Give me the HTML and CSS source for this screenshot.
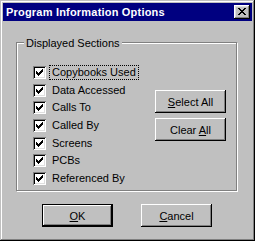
FILE: index.html
```html
<!DOCTYPE html>
<html lang="en">
<head>
    <meta charset="UTF-8">
    <title>Program Information Options</title>
    <link rel="stylesheet" href="styles.css">
</head>
<body>
<div class="dialog">

    <!-- title bar -->
    <div class="titlebar">
        <span class="title">Program Information Options</span>
        <button class="close" type="button">
            <svg width="8" height="7" viewBox="0 0 8 7" shape-rendering="crispEdges">
                <path fill="#000" d="M0 0h2v1h-2z M6 0h2v1h-2z M1 1h2v1h-2z M5 1h2v1h-2z M2 2h4v1h-4z M3 3h2v1h-2z M2 4h4v1h-4z M1 5h2v1h-2z M5 5h2v1h-2z M0 6h2v1h-2z M6 6h2v1h-2z"/>
            </svg>
        </button>
    </div>

    <div class="client">

        <!-- group box -->
        <div class="group">
            <div class="group-label">Displayed Sections</div>
            <div class="group-body">
                <ul class="sections">
                    <li><span class="check"><svg width="7" height="7" viewBox="0 0 7 7" shape-rendering="crispEdges"><path d="M6 0h1v1h-1z M5 1h2v1h-2z M0 2h1v1h-1z M4 2h3v1h-3z M0 3h2v1h-2z M3 3h3v1h-3z M0 4h5v1h-5z M1 5h3v1h-3z M2 6h1v1h-1z"/></svg></span><span class="label focus">Copybooks Used</span></li>
                    <li><span class="check"><svg width="7" height="7" viewBox="0 0 7 7" shape-rendering="crispEdges"><path d="M6 0h1v1h-1z M5 1h2v1h-2z M0 2h1v1h-1z M4 2h3v1h-3z M0 3h2v1h-2z M3 3h3v1h-3z M0 4h5v1h-5z M1 5h3v1h-3z M2 6h1v1h-1z"/></svg></span><span class="label">Data Accessed</span></li>
                    <li><span class="check"><svg width="7" height="7" viewBox="0 0 7 7" shape-rendering="crispEdges"><path d="M6 0h1v1h-1z M5 1h2v1h-2z M0 2h1v1h-1z M4 2h3v1h-3z M0 3h2v1h-2z M3 3h3v1h-3z M0 4h5v1h-5z M1 5h3v1h-3z M2 6h1v1h-1z"/></svg></span><span class="label">Calls To</span></li>
                    <li><span class="check"><svg width="7" height="7" viewBox="0 0 7 7" shape-rendering="crispEdges"><path d="M6 0h1v1h-1z M5 1h2v1h-2z M0 2h1v1h-1z M4 2h3v1h-3z M0 3h2v1h-2z M3 3h3v1h-3z M0 4h5v1h-5z M1 5h3v1h-3z M2 6h1v1h-1z"/></svg></span><span class="label">Called By</span></li>
                    <li><span class="check"><svg width="7" height="7" viewBox="0 0 7 7" shape-rendering="crispEdges"><path d="M6 0h1v1h-1z M5 1h2v1h-2z M0 2h1v1h-1z M4 2h3v1h-3z M0 3h2v1h-2z M3 3h3v1h-3z M0 4h5v1h-5z M1 5h3v1h-3z M2 6h1v1h-1z"/></svg></span><span class="label">Screens</span></li>
                    <li><span class="check"><svg width="7" height="7" viewBox="0 0 7 7" shape-rendering="crispEdges"><path d="M6 0h1v1h-1z M5 1h2v1h-2z M0 2h1v1h-1z M4 2h3v1h-3z M0 3h2v1h-2z M3 3h3v1h-3z M0 4h5v1h-5z M1 5h3v1h-3z M2 6h1v1h-1z"/></svg></span><span class="label">PCBs</span></li>
                    <li><span class="check"><svg width="7" height="7" viewBox="0 0 7 7" shape-rendering="crispEdges"><path d="M6 0h1v1h-1z M5 1h2v1h-2z M0 2h1v1h-1z M4 2h3v1h-3z M0 3h2v1h-2z M3 3h3v1h-3z M0 4h5v1h-5z M1 5h3v1h-3z M2 6h1v1h-1z"/></svg></span><span class="label">Referenced By</span></li>
                </ul>
                <div class="side-buttons">
                    <button class="btn" type="button"><u>S</u>elect All</button>
                    <button class="btn" type="button">Clear <u>A</u>ll</button>
                </div>
            </div>
        </div>

        <!-- dialog buttons -->
        <div class="actions">
            <button class="btn default" type="button"><u>O</u>K</button>
            <button class="btn" type="button"><u>C</u>ancel</button>
        </div>
    </div>
</div>
</body>
</html>
```

FILE: styles.css
```css
body {
    margin: 0;
    font-family: "Liberation Sans", Arial, sans-serif;
    font-size: 11px;
    color: #000;
}

.dialog {
    width: 255px;
    height: 241px;
    box-sizing: border-box;
    padding: 3px;
    background-color: #c0c0c0;
    box-shadow: inset -1px -1px #000, inset 1px 1px #c0c0c0,
                inset -2px -2px #808080, inset 2px 2px #fff;
}

.titlebar {
    height: 18px;
    background-color: #000080;
    display: flex;
    align-items: center;
    padding-left: 3px;
}

.title {
    flex: 1;
    color: #fff;
    font-weight: bold;
    line-height: 18px;
    letter-spacing: 0.2px;
}

.close {
    width: 16px;
    height: 14px;
    margin-right: 2px;
    padding: 3px 0 0 4px;
    border: none;
    background-color: #c0c0c0;
    display: flex;
    align-items: flex-start;
    box-sizing: border-box;
    box-shadow: inset -1px -1px #000, inset 1px 1px #fff,
                inset -2px -2px #808080, inset 2px 2px #dfdfdf;
}

.close svg {
    display: block;
}

.group {
    width: 221px;
    height: 149px;
    box-sizing: border-box;
    margin: 21px 0 0 13px;
    border: 1px solid #808080;
    box-shadow: inset 1px 1px #fff, 1px 1px #fff;
}

.group-label {
    display: inline-block;
    margin: -6px 0 0 7px;
    padding: 0 2px;
    line-height: 13px;
    background-color: #c0c0c0;
    vertical-align: top;
}

.group-body {
    display: flex;
    margin-top: 11px;
    padding-left: 16px;
}

.sections {
    list-style: none;
    margin: 0;
    padding: 0;
    display: grid;
    grid-auto-rows: 13px;
    row-gap: 4.67px;
}

.sections li {
    display: flex;
    align-items: center;
}

.check {
    width: 13px;
    height: 13px;
    box-sizing: border-box;
    padding: 3px;
    margin-right: 4px;
    background-color: #fff;
    box-shadow: inset 1px 1px #808080, inset -1px -1px #fff,
                inset 2px 2px #000, inset -2px -2px #dfdfdf;
}

.check svg {
    display: block;
}

.label {
    padding: 0 2px;
    line-height: 13px;
}

.focus {
    outline: 1px dotted #000;
}

.side-buttons {
    margin-left: auto;
    margin-right: 10px;
    padding-top: 24px;
    display: flex;
    flex-direction: column;
    gap: 5px;
}

.btn {
    width: 71px;
    height: 23px;
    padding: 0;
    border: none;
    background-color: #c0c0c0;
    font-family: inherit;
    font-size: 11px;
    color: #000;
    box-shadow: inset -1px -1px #000, inset 1px 1px #fff,
                inset -2px -2px #808080;
}

.btn.default {
    box-shadow: inset 0 0 0 1px #000, inset -2px -2px #000,
                inset 2px 2px #fff, inset -3px -3px #808080;
}

.actions {
    display: flex;
    gap: 28px;
    margin-top: 13px;
    padding-left: 39px;
}
```
